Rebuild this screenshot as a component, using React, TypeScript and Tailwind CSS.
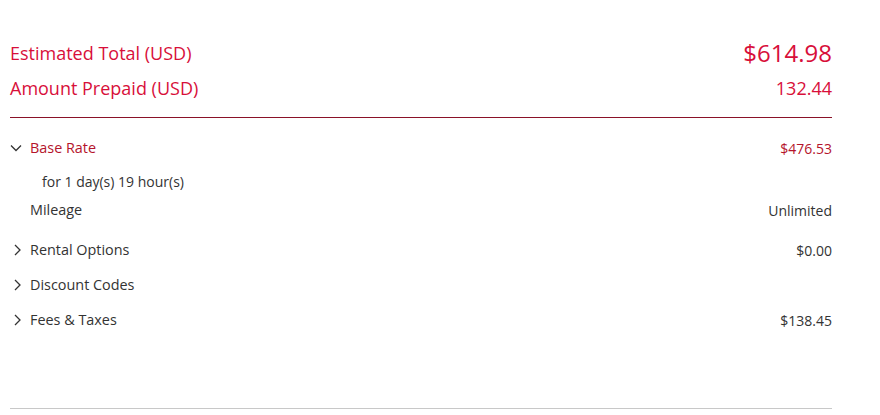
const font = { fontFamily: '"Open Sans", "Noto Sans", sans-serif' };

function ChevronDown() {
  return (
    <svg width="12" height="12" viewBox="0 0 12 12" className="shrink-0">
      <path d="M1 3.5 L6 8.5 L11 3.5" fill="none" stroke="#333" strokeWidth="1.3" />
    </svg>
  );
}

function ChevronRight() {
  return (
    <svg width="12" height="12" viewBox="0 0 12 12" className="shrink-0">
      <path d="M5 1 L10 6 L5 11" fill="none" stroke="#333" strokeWidth="1.3" />
    </svg>
  );
}

interface RowProps {
  label: string;
  value?: string;
  open?: boolean;
  className?: string;
}

function ToggleRow({ label, value, open, className }: RowProps) {
  return (
    <div className={`flex h-[20px] items-center justify-between ${className ?? ""}`}>
      <div className="flex items-center gap-[8px]">
        {open ? <ChevronDown /> : <ChevronRight />}
        <span className={`text-[14.4px] font-medium ${open ? "text-[#b5142c]" : "text-[#333]"}`}>
          {label}
        </span>
      </div>
      {value && (
        <span className={`text-[14px] font-medium ${open ? "text-[#b5142c]" : "text-[#333]"}`}>
          {value}
        </span>
      )}
    </div>
  );
}

export default function App() {
  return (
    <div className="min-h-[415px] bg-white" style={font}>
      <div className="ml-[10px] w-[822px] pt-[39px]">
        <div className="flex h-[28px] items-center justify-between text-[#d80f3a]">
          <span className="text-[18px]">Estimated Total (USD)</span>
          <span className="text-[24px] font-medium">$614.98</span>
        </div>
        <div className="mt-[7px] flex h-[28px] items-center justify-between text-[#d80f3a]">
          <span className="text-[18px]">Amount Prepaid (USD)</span>
          <span className="text-[18px] font-medium">132.44</span>
        </div>
        <div className="mt-[15px] border-t border-[#8a1228]" />

        <ToggleRow label="Base Rate" value="$476.53" open className="mt-[20px]" />
        <div className="mt-[13px] flex h-[20px] items-center pl-[32px] text-[14px] text-[#333]">
          for 1 day(s) 19 hour(s)
        </div>
        <div className="mt-[9px] flex h-[20px] items-center justify-between pl-[20px] text-[14.4px] font-medium text-[#333]">
          <span>Mileage</span>
          <span className="text-[14px]">Unlimited</span>
        </div>
        <ToggleRow label="Rental Options" value="$0.00" className="mt-[20px]" />
        <ToggleRow label="Discount Codes" className="mt-[15px]" />
        <ToggleRow label="Fees & Taxes" value="$138.45" className="mt-[15px]" />

        <div className="mt-[78px] border-t border-[#c8c8c8]" />
      </div>
    </div>
  );
}
